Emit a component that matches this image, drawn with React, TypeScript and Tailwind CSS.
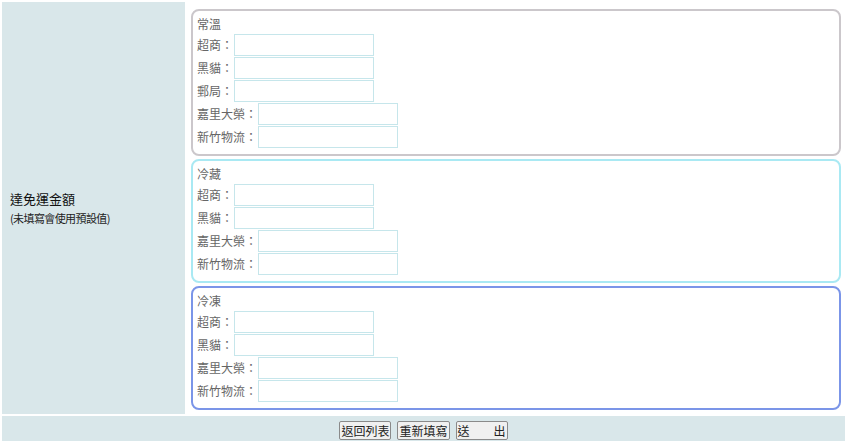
import React from 'react'

type Group = {
  title: string
  border: string
  fields: string[]
}

const groups: Group[] = [
  { title: '常溫', border: 'border-[#cbc7cb]', fields: ['超商', '黑貓', '郵局', '嘉里大榮', '新竹物流'] },
  { title: '冷藏', border: 'border-[#a9e9f3]', fields: ['超商', '黑貓', '嘉里大榮', '新竹物流'] },
  { title: '冷凍', border: 'border-[#7b95e8]', fields: ['超商', '黑貓', '嘉里大榮', '新竹物流'] },
]

function FieldRow({ label }: { label: string }) {
  return (
    <div className="flex items-center h-[22px]">
      <span className="text-[12px] leading-[22px] text-[#666] w-auto">{label}：</span>
      <input
        type="text"
        className="ml-[1px] w-[140px] h-[22px] border border-[#c6e6eb] bg-white outline-none px-1 text-[12px]"
      />
    </div>
  )
}

function ShipCard({ group }: { group: Group }) {
  return (
    <div className={`rounded-[8px] border-2 ${group.border} bg-white pt-[3px] pb-[6px] px-[4px]`}>
      <div className="text-[12px] leading-[20px] text-[#666]">{group.title}</div>
      <div className="flex flex-col gap-[1px]">
        {group.fields.map((f) => (
          <FieldRow key={f} label={f} />
        ))}
      </div>
    </div>
  )
}

export default function App() {
  return (
    <div
      className="w-[850px] h-[441px] bg-white overflow-hidden"
      style={{ fontFamily: '"Noto Sans CJK TC", "Liberation Sans", sans-serif' }}
    >
      <div className="w-[847px] p-[2px] flex flex-col gap-[2px]">
        <div className="flex gap-[2px]">
          {/* label cell */}
          <div className="w-[183px] shrink-0 bg-[#d9e7ea] flex flex-col justify-center pl-[8px]">
            <div className="text-[13px] leading-[20px] text-[#111]">達免運金額</div>
            <div className="text-[11px] leading-[18px] text-[#222] tracking-[-0.6px]">(未填寫會使用預設值)</div>
          </div>

          {/* value cell */}
          <div className="flex-1 bg-white pt-[7px] pb-[4px] px-[4px] flex flex-col gap-[3px]">
            {groups.map((g) => (
              <ShipCard key={g.title} group={g} />
            ))}
          </div>
        </div>

        {/* button bar */}
        <div className="bg-[#d9e7ea] h-[30px] flex justify-center items-start pt-[5px] gap-[6px]">
          <button className="h-[19px] px-[1px] border border-[#8a8a8a] bg-[#f0f0f0] text-[12px] leading-[16px] text-[#222] rounded-[2px]">
            返回列表
          </button>
          <button className="h-[19px] px-[1px] border border-[#8a8a8a] bg-[#f0f0f0] text-[12px] leading-[16px] text-[#222] rounded-[2px]">
            重新填寫
          </button>
          <button className="h-[19px] px-[1px] border border-[#8a8a8a] bg-[#f0f0f0] text-[12px] leading-[16px] text-[#222] rounded-[2px]">
            送　　出
          </button>
        </div>
      </div>
    </div>
  )
}
